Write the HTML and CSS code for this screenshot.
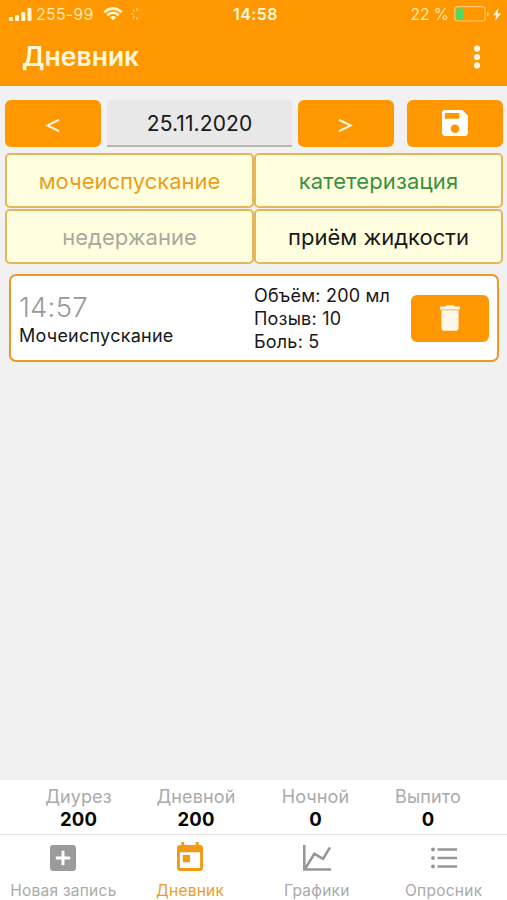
FILE: index.html
```html
<!DOCTYPE html>
<html lang="ru">
<head>
<meta charset="utf-8">
<title>Дневник</title>
<link rel="stylesheet" href="styles.css">
</head>
<body>
<div class="app">
  <header class="header">
    <div class="status">
      <div class="status-left">
        <svg class="signal" viewBox="0 0 23 13"><rect x="0" y="9" width="4" height="4" rx="1"/><rect x="6" y="7" width="4" height="6" rx="1"/><rect x="12.300" y="4" width="4" height="9" rx="1"/><rect x="18.500" y="0" width="4" height="13" rx="1"/></svg>
        <span class="carrier">255-99</span>
        <svg class="wifi" viewBox="0 0 20 14"><path d="M1.300 5.200Q10 -2.600 18.700 5.200" /><path d="M4.200 8.300Q10 3.200 15.800 8.300"/><path class="dot" d="M6.700 10.300Q10 7.600 13.300 10.300L10 13.600Z"/></svg>
        <svg class="spinner" viewBox="0 0 14 14"><path d="M7 4V1M4.800 4.800L2.700 2.700M4 7H1M4.800 9.200L2.700 11.300M7 10v3"/><path class="faint" d="M9.200 9.200l2 2M10 7h3M9.200 4.800l2-2"/></svg>
      </div>
      <div class="clock">14:58</div>
      <div class="status-right">
        <span class="percent">22 %</span>
        <svg class="battery" viewBox="0 0 36 16"><rect class="shell" x=".7" y=".7" width="30.500" height="14.300" rx="3.500"/><rect class="charge" x="2.200" y="2.300" width="7" height="11.200" rx="1.500"/><path class="cap" d="M33 5.500q2 .5 2 2.500t-2 2.500z"/></svg>
        <svg class="bolt" viewBox="0 0 8 13"><path d="M5.500 0L0 7.200h3.300L2 13l6-7.600H4.600z"/></svg>
      </div>
    </div>
    <div class="titlebar">
      <h1 class="title">Дневник</h1>
      <svg class="more" viewBox="0 0 8 24"><circle cx="4" cy="3.600" r="3.100"/><circle cx="4" cy="12" r="3.100"/><circle cx="4" cy="20.400" r="3.100"/></svg>
    </div>
  </header>

  <main class="content">
    <div class="datebar">
      <button class="btn"><svg class="chevron" viewBox="0 0 16 16"><path d="M15 1.800L2.500 8l12.500 6.200"/></svg></button>
      <div class="date"><span>25.11.2020</span></div>
      <button class="btn"><svg class="chevron" viewBox="0 0 16 16"><path d="M1 1.800L13.500 8 1 14.200"/></svg></button>
      <button class="btn save"><svg class="save-icon" viewBox="3 3 18 18"><path d="M17 3H5c-1.110 0-2 .9-2 2v14c0 1.100.89 2 2 2h14c1.100 0 2-.9 2-2V7l-4-4zm-5 16c-1.660 0-3-1.340-3-3s1.340-3 3-3 3 1.340 3 3-1.340 3-3 3zm3-10H5V5h10v4z"/></svg></button>
    </div>
    <div class="filters">
      <div class="filter orange"><span>мочеиспускание</span></div>
      <div class="filter green"><span>катетеризация</span></div>
      <div class="filter gray"><span>недержание</span></div>
      <div class="filter black"><span>приём жидкости</span></div>
    </div>
    <article class="entry">
      <div class="entry-main">
        <div class="time">14:57</div>
        <div class="kind">Мочеиспускание</div>
      </div>
      <div class="details">
        <div>Объём: 200 мл</div>
        <div>Позыв: 10</div>
        <div>Боль: 5</div>
      </div>
      <button class="btn delete"><svg class="trash" viewBox="5 3 14 18"><path d="M6 19c0 1.100.9 2 2 2h8c1.100 0 2-.9 2-2V6.500H6V19zM19 4h-3.500l-1-1h-5l-1 1H5v2h14V4z"/></svg></button>
    </article>
  </main>

  <section class="summary">
    <div class="stat"><span>Диурез</span><b>200</b></div>
    <div class="stat"><span>Дневной</span><b>200</b></div>
    <div class="stat"><span>Ночной</span><b>0</b></div>
    <div class="stat"><span>Выпито</span><b>0</b></div>
  </section>
  <nav class="tabs">
    <div class="tab"><svg class="tab-icon" viewBox="3 3 18 18"><path d="M19 3H5c-1.110 0-2 .9-2 2v14c0 1.100.89 2 2 2h14c1.100 0 2-.9 2-2V5c0-1.100-.9-2-2-2zm-2 10h-4v4h-2v-4H7v-2h4V7h2v4h4v2z"/></svg><span>Новая запись</span></div>
    <div class="tab active"><svg class="tab-icon calendar" viewBox="3 1 18 20"><path d="M19 3h-1V1h-2v2H8V1H6v2H5c-1.110 0-2 .9-2 2v14c0 1.100.89 2 2 2h14c1.100 0 2-.9 2-2V5c0-1.100-.9-2-2-2zm0 16H5V8h14v11zM7 10h5v5H7z"/></svg><span>Дневник</span></div>
    <div class="tab"><svg class="tab-icon chart" viewBox="0 0 28 26"><path d="M1.300 0v24.600H28M2 24L11.300 8.800l8.700 5L27 2.500"/></svg><span>Графики</span></div>
    <div class="tab"><svg class="tab-icon list" viewBox="0 0 26 22"><path d="M6.500 2.500H26M6.500 11H26M6.500 19.500H26"/><circle cx="2" cy="2.500" r="1.900"/><circle cx="2" cy="11" r="1.900"/><circle cx="2" cy="19.500" r="1.900"/></svg><span>Опросник</span></div>
  </nav>
</div>
</body>
</html>
```
FILE: styles.css
```css
* { box-sizing: border-box; }
body { margin: 0; font-family: Inter, "Liberation Sans", sans-serif; color: #181818; }
svg { display: block; flex: none; }
.app { width: 507px; height: 900px; display: flex; flex-direction: column; background: #f1f1f1; overflow: hidden; }

.header { height: 86px; flex: none; background: #ff9800; color: #fff8dc; }
.status { height: 28px; display: grid; grid-template-columns: 1fr auto 1fr; align-items: center; padding: 0 6px 0 9px; font-size: 16px; line-height: 28px; }
.status-left, .status-right { display: flex; align-items: center; }
.status-right { justify-content: flex-end; }
.signal { width: 23px; height: 13px; fill: #fff5d0; }
.carrier { margin-left: 4px; color: #ffe6ab; letter-spacing: .2px; }
.wifi { width: 20px; height: 14px; margin-left: 9px; margin-bottom: 1px; fill: none; stroke: #fff5d0; stroke-width: 2.600; }
.wifi .dot { fill: #fff5d0; stroke: none; }
.spinner { width: 14px; height: 14px; margin-left: 7px; fill: none; stroke: #ffd485; stroke-width: 1.200; }
.spinner .faint { stroke: #ffa92b; }
.clock { font-weight: 600; letter-spacing: .4px; padding-left: 1px; }
.percent { color: #ffe6ab; font-size: 15.500px; line-height: 26px; padding-top: 2px; }
.battery { width: 36px; height: 16px; margin-left: 5px; }
.shell { fill: none; stroke: #ffc66a; stroke-width: 1.200; }
.charge { fill: #4cd964; }
.cap { fill: #ffc66a; }
.bolt { width: 8px; height: 13px; margin-left: 3px; fill: #fff8dc; }
.titlebar { height: 58px; display: flex; align-items: center; justify-content: space-between; padding: 0 26px 0 22px; }
.title { margin: 0 0 2px; font-size: 26.500px; font-weight: 600; line-height: 56px; }
.more { width: 8px; height: 24px; margin-bottom: 1px; fill: #fff8e8; }

.content { flex: 1; padding: 14px 4px 0 5px; }
.datebar { display: grid; grid-template: 47px / 96px 185px 96px 96px; column-gap: 6px; }
.btn { border: 0; border-radius: 6px; padding: 0; background: #ff9800; display: flex; align-items: center; justify-content: center; }
.save { margin-left: 7px; width: 96px; }
.chevron { width: 15px; height: 15px; margin-top: 3px; margin-right: 2px; fill: none; stroke: #fff4dc; stroke-width: 2.300; }
.save-icon { width: 26px; height: 26px; margin-bottom: 1px; margin-right: 1px; fill: #fff; }
.date { background: #e8e8e8; border-bottom: 2px solid #b5b5b5; border-radius: 3px 3px 0 0; text-align: center; font-size: 21px; line-height: 47px; }
.date span { letter-spacing: .1px; }
.filters { margin-top: 6px; display: grid; grid-template-columns: 249px 249px; grid-auto-rows: 55px; row-gap: 1px; }
.filter { border: 2px solid #e6b65c; border-radius: 5px; background: #ffffe0; text-align: center; font-size: 22px; line-height: 52px; }
.orange { color: #eb9d20; }
.green { color: #3b903b; letter-spacing: .15px; }
.gray { color: #a8a8a0; }
.black { color: #181818; }
.entry { margin: 10px 4px 0; width: 490px; height: 88px; border: 2px solid #eb9a25; border-radius: 7px; background: #fff; display: grid; grid-template-columns: 235px 157px 78px; align-items: center; padding-left: 8px; }
.entry-main { padding-top: 3px; }
.time { font-size: 27.500px; line-height: 32px; color: #999; font-weight: 350; letter-spacing: .25px; }
.kind { font-size: 18px; line-height: 26px; letter-spacing: .25px; }
.details { font-size: 18px; line-height: 23px; letter-spacing: .2px; padding-top: 1px; }
.delete { height: 47px; }
.trash { width: 20px; height: 26px; margin-bottom: 1px; fill: #fff8ea; }

.summary { height: 55px; flex: none; background: #fff; border-bottom: 1px solid #e5e5e5; padding: 6px 21px 0 20px; display: grid; grid-template-columns: 117px 118px 121px 104px; }
.stat { display: flex; flex-direction: column; align-items: center; font-size: 18px; line-height: 22px; letter-spacing: .15px; color: #aaa; }
.stat b { color: #050505; font-weight: 700; font-size: 18.500px; line-height: 22px; }
.tabs { height: 65px; flex: none; background: #fff; display: grid; grid-template-columns: repeat(4, 1fr); }
.tab { display: grid; grid-template-rows: 46px 20px; justify-items: center; align-items: center; font-size: 15.500px; line-height: 20px; letter-spacing: .25px; color: #aaa; }
.tab-icon { width: 26px; height: 26px; fill: #9b9b9b; }
.tab.active { color: #eb9d20; }
.calendar { height: 29px; margin-bottom: 3px; fill: #f39a14; }
.chart { width: 28px; fill: none; stroke: #969696; stroke-width: 2.500; }
.list { height: 22px; stroke: none; fill: #969696; }
.list path { stroke: #969696; stroke-width: 2.500; }
```
